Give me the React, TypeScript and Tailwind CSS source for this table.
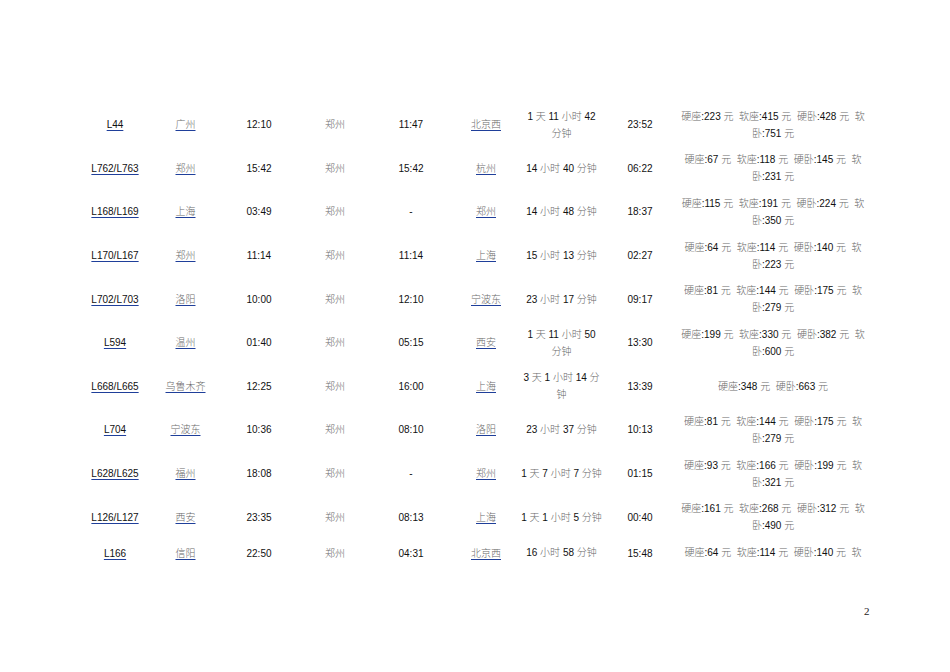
import React from 'react'

type Row = {
  train: string
  from: string
  dep: string
  via: string
  arr: string
  to: string
  dur: string[]
  arrTime: string
  price: string[]
}

const rows: Row[] = [
  { train: 'L44', from: '广州', dep: '12:10', via: '郑州', arr: '11:47', to: '北京西', dur: ['1 天 11 小时 42', '分钟'], arrTime: '23:52', price: ['硬座:223 元  软座:415 元  硬卧:428 元  软', '卧:751 元'] },
  { train: 'L762/L763', from: '郑州', dep: '15:42', via: '郑州', arr: '15:42', to: '杭州', dur: ['14 小时 40 分钟'], arrTime: '06:22', price: ['硬座:67 元  软座:118 元  硬卧:145 元  软', '卧:231 元'] },
  { train: 'L168/L169', from: '上海', dep: '03:49', via: '郑州', arr: '-', to: '郑州', dur: ['14 小时 48 分钟'], arrTime: '18:37', price: ['硬座:115 元  软座:191 元  硬卧:224 元  软', '卧:350 元'] },
  { train: 'L170/L167', from: '郑州', dep: '11:14', via: '郑州', arr: '11:14', to: '上海', dur: ['15 小时 13 分钟'], arrTime: '02:27', price: ['硬座:64 元  软座:114 元  硬卧:140 元  软', '卧:223 元'] },
  { train: 'L702/L703', from: '洛阳', dep: '10:00', via: '郑州', arr: '12:10', to: '宁波东', dur: ['23 小时 17 分钟'], arrTime: '09:17', price: ['硬座:81 元  软座:144 元  硬卧:175 元  软', '卧:279 元'] },
  { train: 'L594', from: '温州', dep: '01:40', via: '郑州', arr: '05:15', to: '西安', dur: ['1 天 11 小时 50', '分钟'], arrTime: '13:30', price: ['硬座:199 元  软座:330 元  硬卧:382 元  软', '卧:600 元'] },
  { train: 'L668/L665', from: '乌鲁木齐', dep: '12:25', via: '郑州', arr: '16:00', to: '上海', dur: ['3 天 1 小时 14 分', '钟'], arrTime: '13:39', price: ['硬座:348 元  硬卧:663 元'] },
  { train: 'L704', from: '宁波东', dep: '10:36', via: '郑州', arr: '08:10', to: '洛阳', dur: ['23 小时 37 分钟'], arrTime: '10:13', price: ['硬座:81 元  软座:144 元  硬卧:175 元  软', '卧:279 元'] },
  { train: 'L628/L625', from: '福州', dep: '18:08', via: '郑州', arr: '-', to: '郑州', dur: ['1 天 7 小时 7 分钟'], arrTime: '01:15', price: ['硬座:93 元  软座:166 元  硬卧:199 元  软', '卧:321 元'] },
  { train: 'L126/L127', from: '西安', dep: '23:35', via: '郑州', arr: '08:13', to: '上海', dur: ['1 天 1 小时 5 分钟'], arrTime: '00:40', price: ['硬座:161 元  软座:268 元  硬卧:312 元  软', '卧:490 元'] },
  { train: 'L166', from: '信阳', dep: '22:50', via: '郑州', arr: '04:31', to: '北京西', dur: ['16 小时 58 分钟'], arrTime: '15:48', price: ['硬座:64 元  软座:114 元  硬卧:140 元  软'] },
]

const font = "font-['Liberation_Sans','Noto_Sans_CJK_SC',sans-serif]"

// chinese glyphs come out lighter in the scan, numbers stay black
function Mixed({ text }: { text: string }) {
  const parts = text.split(/([\u4e00-\u9fff]+)/)
  return (
    <>
      {parts.map((p, i) =>
        /[\u4e00-\u9fff]/.test(p) ? (
          <span key={i} className="text-[#6a6a6a] font-light">{p}</span>
        ) : (
          <span key={i}>{p}</span>
        )
      )}
    </>
  )
}

function Link({ children, gray }: { children: React.ReactNode; gray?: boolean }) {
  return (
    <span
      className={`underline decoration-[#1f3f9a] underline-offset-2 decoration-[1px] ${gray ? 'text-[#6a6a6a] font-light' : 'text-[#111]'}`}
    >
      {children}
    </span>
  )
}

function Lines({ lines }: { lines: string[] }) {
  return (
    <div className="flex flex-col items-center leading-[17px] whitespace-pre">
      {lines.map((l, i) => (
        <span key={i}><Mixed text={l} /></span>
      ))}
    </div>
  )
}

export default function App() {
  return (
    <div className={`w-[950px] h-[672px] bg-white relative ${font} text-[10px] text-[#111]`}>
      <div className="pt-[103px] pl-[80px]">
        <div className="grid grid-cols-[70px_71px_76px_76px_76px_74px_77px_80px_186px]">
          {rows.map((r, i) => {
            const h = i === rows.length - 1 ? 'h-[22px] items-end' : 'h-[43.6px] items-center'
            const cell = `flex justify-center ${h}`
            return (
              <React.Fragment key={i}>
                <div className={cell}><Link>{r.train}</Link></div>
                <div className={cell}><Link gray>{r.from}</Link></div>
                <div className={cell}>{r.dep}</div>
                <div className={`${cell} text-[#6a6a6a] font-light`}>{r.via}</div>
                <div className={cell}>{r.arr}</div>
                <div className={cell}><Link gray>{r.to}</Link></div>
                <div className={cell}><Lines lines={r.dur} /></div>
                <div className={cell}>{r.arrTime}</div>
                <div className={cell}><Lines lines={r.price} /></div>
              </React.Fragment>
            )
          })}
        </div>
      </div>
      <div className="absolute left-[864px] top-[603px] text-[11px] font-['Liberation_Serif',serif] text-[#222]">2</div>
    </div>
  )
}
